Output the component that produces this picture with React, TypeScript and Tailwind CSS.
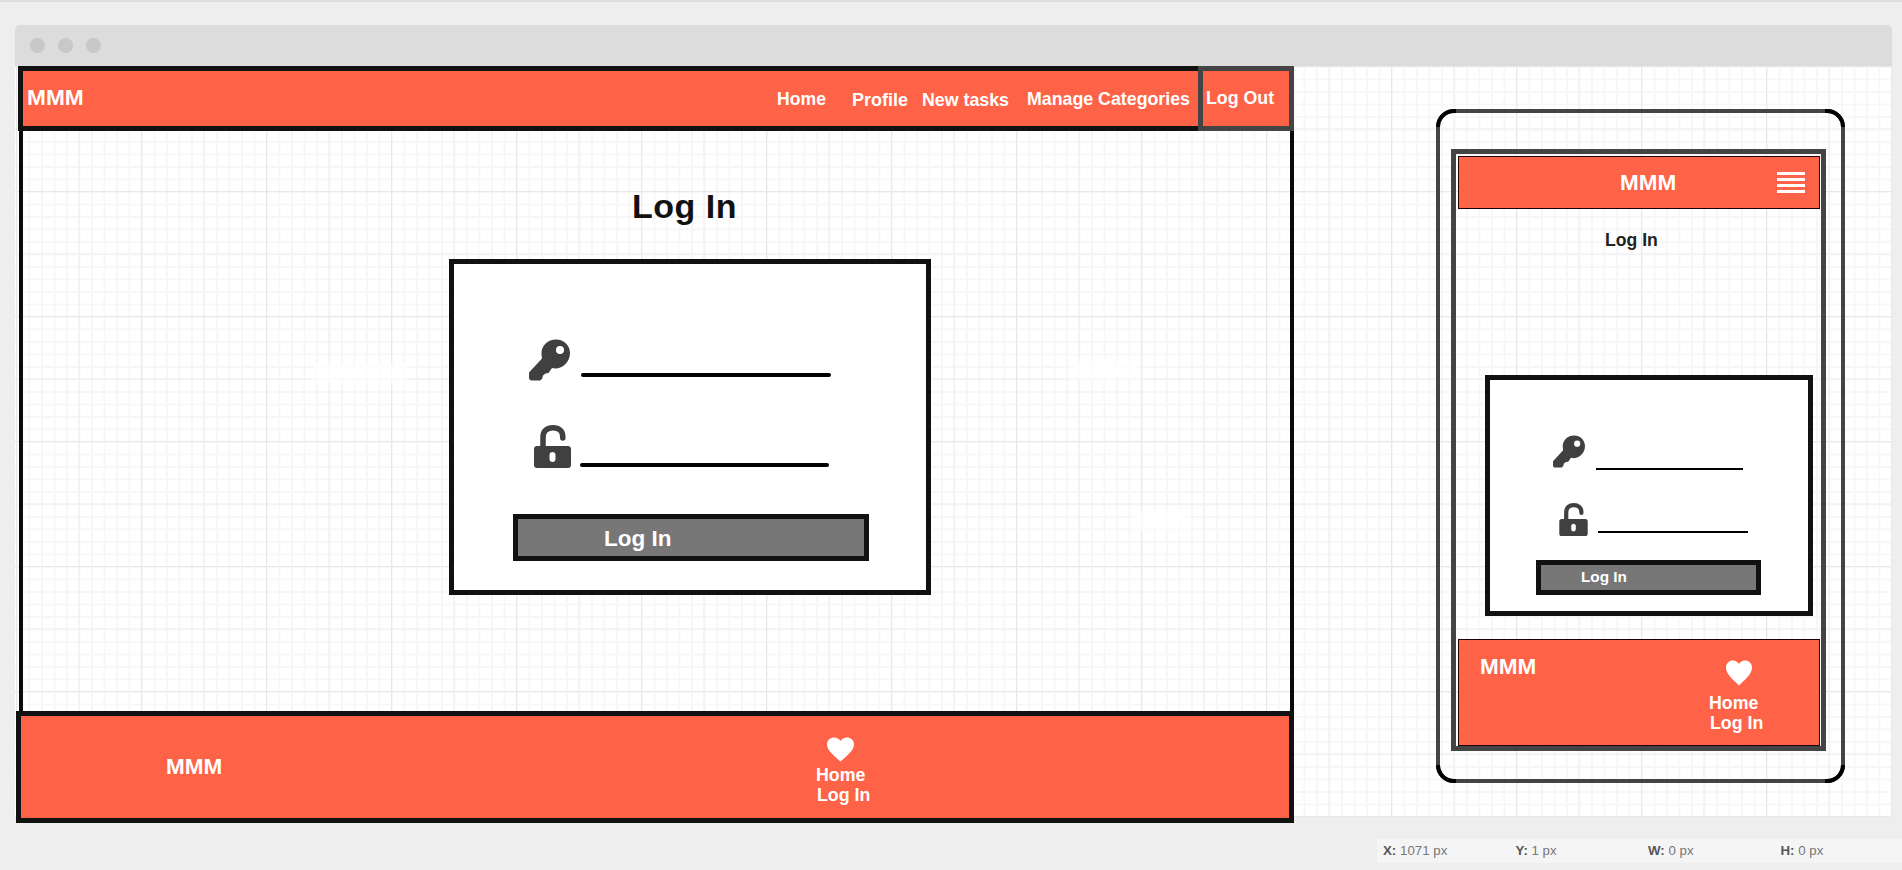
function KeyIcon({ className }: { className: string }) {
  return (
    <svg viewBox="0 0 41 42" className={className} fill="#404040">
      <path
        fillRule="evenodd"
        d="M27 0.5C35 0.5 41 6.5 41 14C41 22 35 29 27 29.5C25.5 29.5 24 29.2 23 29L19.5 34L16.5 34.5L14 36.5L13 40L11 41.5L3 41.5C1 41.5 0 40.5 0 38.5L0 33.5L13 19.5C12.8 18 12.5 16 12.5 14C12.5 6.5 19 0.5 27 0.5ZM31 7A4 4 0 1 0 31 15A4 4 0 1 0 31 7Z"
      />
    </svg>
  );
}

function LockIcon({ className }: { className: string }) {
  return (
    <svg viewBox="0 0 37 43" className={className} fill="#404040">
      <path d="M9 23V12C9 6 13 2.8 19 2.8C25 2.8 28.8 6 28.8 12V13" fill="none" stroke="#404040" strokeWidth="5.5" strokeLinecap="round" />
      <path
        fillRule="evenodd"
        d="M3 21H34C35.8 21 37 22.2 37 24V40C37 41.8 35.8 43 34 43H3C1.2 43 0 41.8 0 40V24C0 22.2 1.2 21 3 21ZM18.5 27C16.8 27 15.5 28.2 15.5 30V34C15.5 35.8 16.8 37 18.5 37C20.2 37 21.5 35.8 21.5 34V30C21.5 28.2 20.2 27 18.5 27Z"
      />
    </svg>
  );
}

function HeartIcon({ className }: { className: string }) {
  return (
    <svg viewBox="0 0 24 24" className={className} fill="white" preserveAspectRatio="none">
      <path d="M12 23.5C5 17 0 12.5 0 7C0 3 3 0.5 6.5 0.5C8.8 0.5 10.8 1.8 12 3.8C13.2 1.8 15.2 0.5 17.5 0.5C21 0.5 24 3 24 7C24 12.5 19 17 12 23.5Z" />
    </svg>
  );
}

function Ghost({ className }: { className: string }) {
  return <div className={`absolute bg-white/70 blur-[2px] ${className}`} />;
}

function Corner({ className }: { className: string }) {
  return <div className={`absolute h-[18px] w-[20px] border-black ${className}`} />;
}

function StatusItem({ label, value }: { label: string; value: string }) {
  return (
    <div className="w-[132.5px] shrink-0">
      <span className="font-bold text-[#555555]">{label}</span> <span className="text-[#777777]">{value}</span>
    </div>
  );
}

function DesktopMock() {
  return (
    <div className="ml-px flex w-[1278px] shrink-0 flex-col">
      <header className="ml-[2px] flex h-[65px] w-[1276px] text-white">
        <div className="flex w-[1180px] items-center border-[5px] border-r-0 border-[#111111] bg-[#ff6347] pr-[8px] pl-[4px] font-bold">
          <div className="-mt-[2px] text-[22.7px]">MMM</div>
          <div className="mt-[2px] ml-auto text-[17.6px]">Home</div>
          <div className="mt-[3px] ml-[26px] text-[18px]">Profile</div>
          <div className="mt-[3px] ml-[14px] text-[17.8px]">New tasks</div>
          <div className="mt-[2px] ml-[18px] text-[17.8px]">Manage Categories</div>
        </div>
        <div className="flex w-[96px] items-center border-[5px] border-[#444444] bg-[#ff6347] pl-[3px] text-[17.8px] font-bold">
          Log Out
        </div>
      </header>

      <div className="relative ml-[3px] h-[580px] w-[1275px] border-x-4 border-[#0a0a0a]">
        <Ghost className="top-[232px] left-[290px] h-[20px] w-[94px]" />
        <Ghost className="top-[229px] left-[1047px] h-[20px] w-[70px]" />
        <Ghost className="top-[379px] left-[1110px] h-[20px] w-[57px]" />
        <h1 className="mt-[55px] ml-[609px] text-[34px] leading-[40px] font-bold tracking-[0.5px] text-[#111111]">Log In</h1>
        <div className="mt-[33px] ml-[426px] h-[336px] w-[482px] border-[5px] border-[#111111] bg-white">
          <div className="mt-[75px] ml-[75px] flex items-start">
            <KeyIcon className="h-[42px] w-[41px]" />
            <div className="mt-[34px] ml-[11px] h-1 w-[250px] rounded-full bg-black" />
          </div>
          <div className="mt-[44px] ml-[80px] flex items-start">
            <LockIcon className="h-[43px] w-[37px]" />
            <div className="mt-[38px] ml-[9px] h-1 w-[249px] rounded-full bg-black" />
          </div>
          <div className="mt-[46px] ml-[59px] flex h-[47px] w-[356px] items-center border-[5px] border-[#111111] bg-[#777777] pt-[2px] pl-[86px] text-[22.5px] font-bold text-white">
            Log In
          </div>
        </div>
      </div>

      <footer className="flex h-[112px] items-start border-[5px] border-[#111111] bg-[#ff6347] font-bold text-white">
        <div className="mt-[38px] ml-[145px] w-[650px] text-[22.5px] leading-[26px]">MMM</div>
        <div className="pt-[21px] text-[17.8px] leading-[20px]">
          <HeartIcon className="ml-[11px] h-[25px] w-[27px]" />
          <div className="mt-[3px]">Home</div>
          <div className="ml-px">Log In</div>
        </div>
      </footer>
    </div>
  );
}

function PhoneMock() {
  return (
    <div className="relative mt-[43px] ml-[142px] h-[674px] w-[409px] shrink-0 rounded-[18px] border-[4px] border-[#444444]">
      <Corner className="-top-[4px] -left-[4px] rounded-tl-[18px] border-t-[4px] border-l-[4px]" />
      <Corner className="-top-[4px] -right-[4px] rounded-tr-[18px] border-t-[4px] border-r-[4px]" />
      <Corner className="-bottom-[4px] -left-[4px] rounded-bl-[18px] border-b-[4px] border-l-[4px]" />
      <Corner className="-right-[4px] -bottom-[4px] rounded-br-[18px] border-r-[4px] border-b-[4px]" />

      <div className="mt-[36px] ml-[11px] h-[602px] w-[375px] border-[5px] border-[#444444]">
        <header className="mt-[2px] ml-[2px] flex h-[53px] w-[362px] items-center border-[1.5px] border-[#200000] bg-[#ff6347] font-bold text-white">
          <div className="ml-[161px] text-[22.5px]">MMM</div>
          <div className="mr-[14px] ml-auto flex h-[22px] w-[28px] flex-col justify-between">
            <div className="h-[3px] bg-white" />
            <div className="h-[3px] bg-white" />
            <div className="h-[3px] bg-white" />
            <div className="h-[3px] bg-white" />
          </div>
        </header>
        <h2 className="mt-[20px] ml-[149px] text-[17.6px] leading-[23px] font-bold text-[#222222]">Log In</h2>
        <div className="mt-[123px] ml-[29px] h-[241px] w-[328px] border-[5px] border-[#111111] bg-white">
          <div className="mt-[55px] ml-[63px] flex items-start">
            <KeyIcon className="h-[33px] w-[32px]" />
            <div className="mt-[33px] ml-[11px] h-[2px] w-[147px] bg-black" />
          </div>
          <div className="mt-[33px] ml-[69px] flex items-start">
            <LockIcon className="h-[33px] w-[29px]" />
            <div className="mt-[28px] ml-[10px] h-[2px] w-[150px] bg-black" />
          </div>
          <div className="mt-[24px] ml-[46px] flex h-[35px] w-[225px] items-center border-[5px] border-[#111111] bg-[#777777] pl-[40px] text-[15.3px] font-bold text-white">
            Log In
          </div>
        </div>
        <footer className="mt-[23px] ml-[2px] flex h-[107px] w-[362px] items-start border-[1.5px] border-[#200000] bg-[#ff6347] font-bold text-white">
          <div className="mt-[14px] ml-[21px] w-[229px] text-[22.5px] leading-[26px]">MMM</div>
          <div className="pt-[20px] text-[17.8px] leading-[20px]">
            <HeartIcon className="ml-[17px] h-[26px] w-[26px]" />
            <div className="mt-[7px]">Home</div>
            <div className="ml-px">Log In</div>
          </div>
        </footer>
      </div>
    </div>
  );
}

export default function App() {
  return (
    <div className="h-[870px] overflow-hidden bg-[#eeeeee] font-['Liberation_Sans',Arial,sans-serif]">
      <div className="h-[2px] bg-[#dddddd]" />
      <div className="mt-[23px] ml-[15px] w-[1877px]">
        <div className="flex h-[41px] items-center gap-[13px] rounded-t-[5px] bg-[#dcdcdc] pl-[15px]">
          <div className="h-[15px] w-[15px] rounded-full bg-[#c8c8c8]" />
          <div className="h-[15px] w-[15px] rounded-full bg-[#c8c8c8]" />
          <div className="h-[15px] w-[15px] rounded-full bg-[#c8c8c8]" />
        </div>
        <div className="flex h-[751px] items-start bg-white bg-[linear-gradient(to_right,#e8e8e8_1px,transparent_1px),linear-gradient(to_bottom,#e8e8e8_1px,transparent_1px),linear-gradient(to_right,#efefef_1px,transparent_1px),linear-gradient(to_bottom,#efefef_1px,transparent_1px),linear-gradient(to_right,#f7f7f7_2px,transparent_2px),linear-gradient(to_bottom,#f7f7f7_2px,transparent_2px)] bg-size-[125px_125px,125px_125px,62.5px_62.5px,62.5px_62.5px,12.5px_12.5px,12.5px_12.5px] bg-position-[1px_0]">
          <DesktopMock />
          <PhoneMock />
        </div>
      </div>
      <div className="mt-[22px] ml-[1377px] flex h-[24px] items-center bg-[#f5f5f5] pl-[6px] text-[13.3px]">
        <StatusItem label="X:" value="1071 px" />
        <StatusItem label="Y:" value="1 px" />
        <StatusItem label="W:" value="0 px" />
        <StatusItem label="H:" value="0 px" />
      </div>
    </div>
  );
}
